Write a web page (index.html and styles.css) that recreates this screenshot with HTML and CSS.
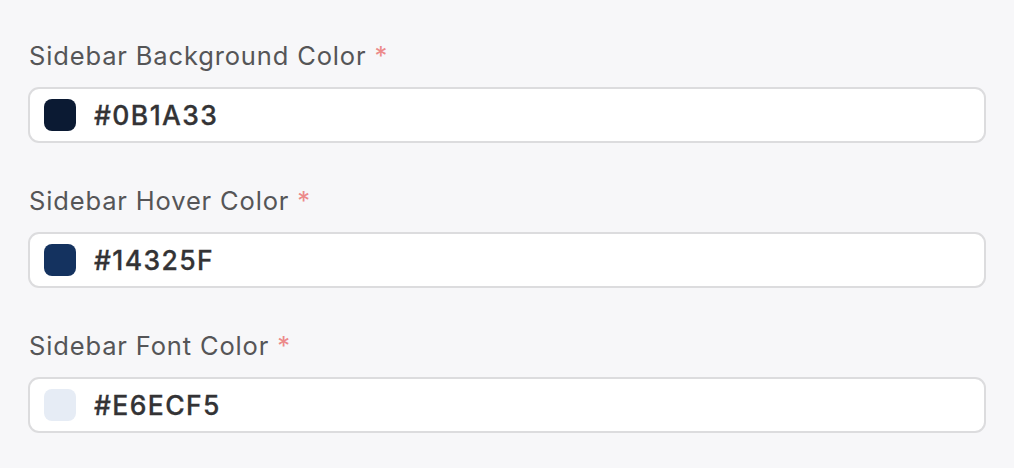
FILE: index.html
```html
<!DOCTYPE html>
<html>
<head>
<meta charset="utf-8">
<link rel="stylesheet" href="styles.css">
</head>
<body>
<div class="form">
  <div class="field">
    <label class="label">Sidebar Background Color <span class="req">*</span></label>
    <div class="input">
      <span class="swatch sw-bg"></span>
      <span class="value">#0B1A33</span>
    </div>
  </div>
  <div class="field">
    <label class="label">Sidebar Hover Color <span class="req">*</span></label>
    <div class="input">
      <span class="swatch sw-hover"></span>
      <span class="value">#14325F</span>
    </div>
  </div>
  <div class="field">
    <label class="label">Sidebar Font Color <span class="req">*</span></label>
    <div class="input">
      <span class="swatch sw-font"></span>
      <span class="value">#E6ECF5</span>
    </div>
  </div>
</div>
</body>
</html>
```
FILE: styles.css
```css
html, body {
  margin: 0;
  padding: 0;
  background: #f7f7f9;
  font-family: Inter, "Noto Sans", sans-serif;
}
.form {
  padding: 38px 28px 0 28px;
  width: 958px;
  display: flex;
  flex-direction: column;
  gap: 40px;
}
.field {
  display: flex;
  flex-direction: column;
  gap: 13px;
}
.label {
  font-size: 25.5px;
  line-height: 36px;
  color: #555557;
  letter-spacing: 0.85px;
  padding-left: 1px;
}
.req {
  color: #ec8a8a;
  margin-left: 0;
}
.input {
  box-sizing: border-box;
  height: 56px;
  background: #fff;
  border: 2px solid #dcdcde;
  border-radius: 11px;
  display: flex;
  align-items: center;
  padding-left: 14px;
  gap: 18px;
}
.swatch {
  width: 32px;
  height: 32px;
  border-radius: 8px;
  flex: none;
}
.sw-bg { background: #0b1a33; }
.sw-hover { background: #14325f; }
.sw-font { background: #e6ecf5; }
.value {
  font-size: 26.5px;
  font-weight: 500;
  color: #333335;
  letter-spacing: 1.4px;
  -webkit-text-stroke: 0.3px #333335;
}
```
